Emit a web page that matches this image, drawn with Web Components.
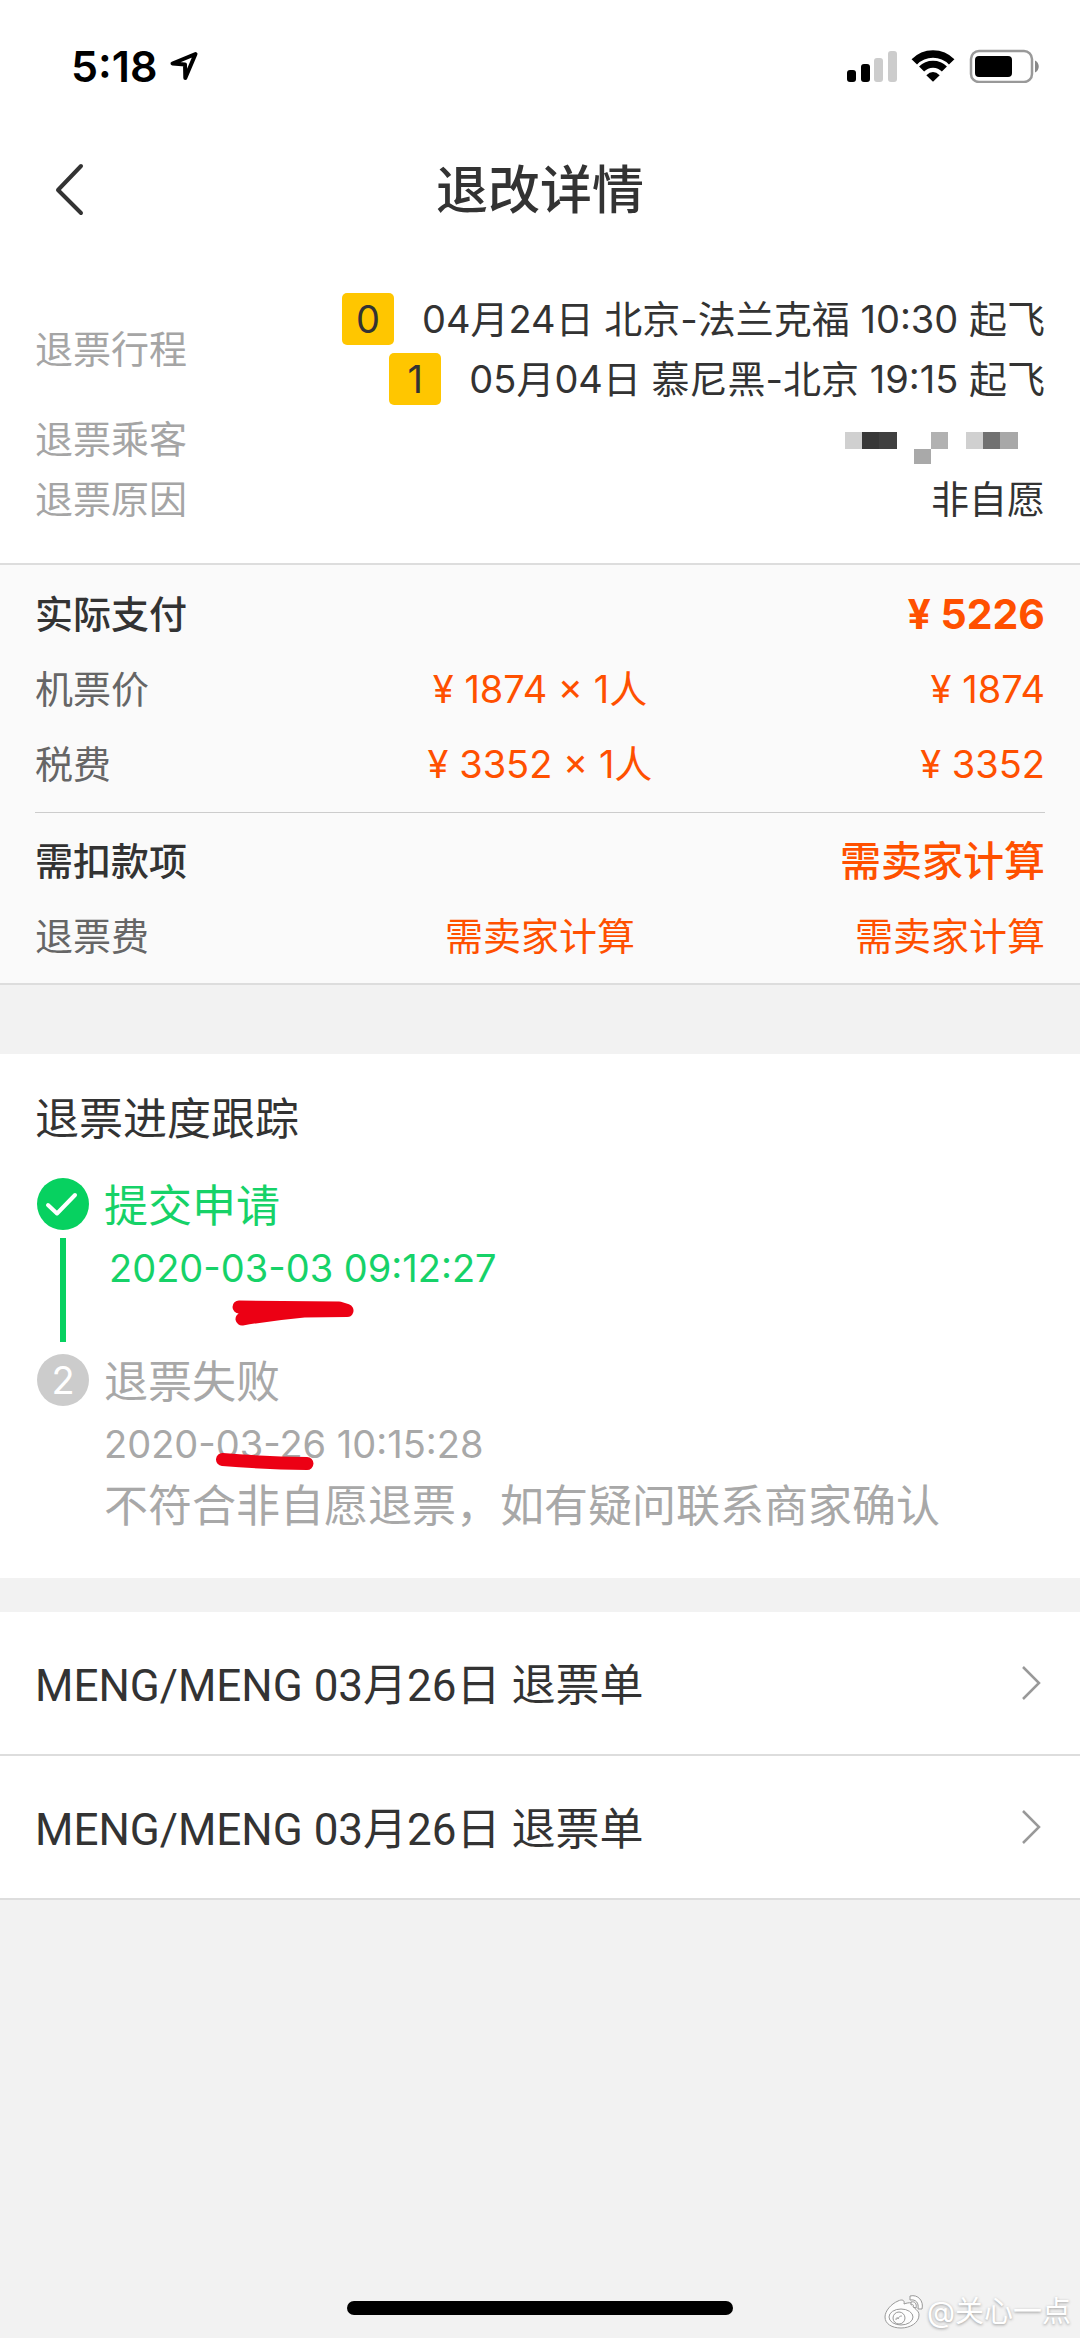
<!DOCTYPE html>
<html lang="zh-CN">
<head>
    <meta charset="UTF-8">
    <meta name="viewport" content="width=device-width, initial-scale=1">
    <title>退改详情</title>
    <style>
        body {
            margin: 0;
            background: #f2f2f2;
            color: #333;
            font-family: Inter, "Noto Sans CJK SC", sans-serif;
            font-size: 38px;
        }
    </style>
</head>
<body>

<template id="refund-page">
    <style>
        :host {
            display: flex;
            flex-direction: column;
            min-height: 100vh;
        }

        main {
            flex: 1;
        }
    </style>
    <slot name="top"></slot>
    <main><slot></slot></main>
    <slot name="bottom"></slot>
</template>

<template id="status-bar">
    <style>
        :host {
            display: flex;
            align-items: center;
            justify-content: space-between;
            height: 132px;
            padding: 0 40px 0 71px;
            background: #fff;
            color: #000;
            font-size: 43px;
            font-weight: 600;
        }

        div {
            display: flex;
            align-items: center;
            gap: 12px;
        }

        .icons {
            gap: 14px;
        }

        svg {
            display: block;
        }
    </style>
    <div>
        <slot></slot>
        <svg width="30" height="32" viewBox="0 0 30 32" fill="none" stroke="#000" stroke-width="4" stroke-linejoin="round">
            <path d="M26.5 4 3.5 13.5 16 14.5 16.3 28Z"/>
        </svg>
    </div>
    <div class="icons">
        <svg width="50" height="32" viewBox="0 0 50 32">
            <rect x="0" y="20" width="9" height="12" rx="3"/>
            <rect x="14" y="14" width="9" height="18" rx="3"/>
            <rect x="27" y="8" width="9" height="24" rx="3" fill="#ccc"/>
            <rect x="41" y="1" width="9" height="31" rx="3" fill="#ccc"/>
        </svg>
        <svg width="44" height="32" viewBox="0 0 44 32">
            <g fill="none" stroke="#000">
                <path d="M3.3 11.9A26 26 0 0 1 40.7 11.9" stroke-width="7.6"/>
                <path d="M10.6 19A15.8 15.8 0 0 1 33.4 19" stroke-width="7"/>
            </g>
            <path d="M22 31.8 15.3 25.2Q22 18.8 28.7 25.2Z"/>
        </svg>
        <svg width="71" height="34" viewBox="0 0 71 34">
            <rect x="2" y="2" width="61" height="31" rx="8" fill="#fff" stroke="#999" stroke-width="2.5"/>
            <rect x="6" y="7" width="37" height="21" rx="4"/>
            <path d="M66 11.5C71 13.5 71 21.5 66 23.5Z" fill="#888"/>
        </svg>
    </div>
</template>

<template id="nav-header">
    <style>
        :host {
            display: grid;
            grid-template-columns: 1fr auto 1fr;
            align-items: center;
            height: 114px;
            background: #fff;
        }

        button {
            justify-self: start;
            padding: 30px 44px 30px 54px;
            border: 0;
            background: none;
        }

        svg {
            display: block;
        }

        h1 {
            margin: 0;
            padding-top: 4px;
            font-size: 52px;
            font-weight: 500;
            line-height: 72px;
        }
    </style>
    <button type="button" aria-label="返回">
        <svg width="32" height="54" viewBox="0 0 32 54" fill="none" stroke="#333" stroke-width="4" stroke-linecap="round" stroke-linejoin="round">
            <path d="M27 4 4 28 27 51"/>
        </svg>
    </button>
    <h1><slot></slot></h1>
</template>

<template id="info-list">
    <style>
        :host {
            display: block;
            padding: 43px 35px 34px;
            border-bottom: 2px solid #ddd;
            background: #fff;
        }
    </style>
    <slot></slot>
</template>

<template id="info-row">
    <style>
        :host {
            display: flex;
            align-items: center;
            justify-content: space-between;
            line-height: 60px;
        }

        .label {
            color: #a5a5a5;
        }

        .value {
            display: flex;
            flex-direction: column;
            align-items: flex-end;
        }
    </style>
    <span class="label"><slot name="label"></slot></span>
    <div class="value"><slot></slot></div>
</template>

<template id="flight-leg">
    <style>
        :host {
            display: flex;
            align-items: center;
            gap: 28px;
        }

        .index {
            width: 52px;
            border-radius: 5px;
            background: #ffc600;
            line-height: 52px;
            text-align: center;
        }
    </style>
    <span class="index"><slot name="index"></slot></span>
    <span><slot></slot></span>
</template>

<!-- Passenger names are masked out with grey tiles -->
<template id="masked-name">
    <style>
        :host {
            display: block;
            height: 60px;
        }

        svg {
            display: block;
        }
    </style>
    <svg width="200" height="60" viewBox="0 0 200 60" role="img" aria-label="已隐藏" shape-rendering="crispEdges">
        <rect x="0" y="23" width="17" height="17" fill="#d0d0d0"/>
        <rect x="17" y="23" width="17" height="17" fill="#383838"/>
        <rect x="34" y="23" width="18" height="17" fill="#404040"/>
        <rect x="69" y="40" width="17" height="15" fill="#a9a9a9"/>
        <rect x="86" y="23" width="17" height="17" fill="#b1b1b1"/>
        <rect x="121" y="23" width="17" height="17" fill="#d0d0d0"/>
        <rect x="138" y="23" width="17" height="17" fill="#717171"/>
        <rect x="155" y="23" width="18" height="17" fill="#a8a8a8"/>
    </svg>
</template>

<template id="fare-table">
    <style>
        :host {
            display: block;
            padding: 12px 35px 9px;
            border-bottom: 2px solid #ddd;
            background: #fafafa;
        }

        table {
            width: 100%;
            table-layout: fixed;
            border-collapse: collapse;
            line-height: 75px;
        }

        th,
        td {
            padding: 0;
            color: #ff5000;
            text-align: right;
        }

        th {
            color: #666;
            font-weight: 400;
            text-align: left;
        }

        td:nth-child(2) {
            text-align: center;
        }

        .total th {
            color: #333;
            font-weight: 500;
        }

        .total td {
            font-size: 41px;
            font-weight: 700;
        }

        .total .text {
            font-weight: 500;
        }

        tbody + tbody::before {
            content: "";
            display: table-row;
            height: 12px;
        }

        tbody:first-child::after {
            content: "";
            display: table-row;
            height: 10px;
        }

        tbody + tbody {
            border-top: 1px solid #ccc;
        }
    </style>
    <table>
        <tbody>
            <tr class="total"><th scope="row">实际支付</th><td></td><td>¥ 5226</td></tr>
            <tr><th scope="row">机票价</th><td>¥ 1874 × 1人</td><td>¥ 1874</td></tr>
            <tr><th scope="row">税费</th><td>¥ 3352 × 1人</td><td>¥ 3352</td></tr>
        </tbody>
        <tbody>
            <tr class="total"><th scope="row">需扣款项</th><td></td><td class="text">需卖家计算</td></tr>
            <tr><th scope="row">退票费</th><td>需卖家计算</td><td>需卖家计算</td></tr>
        </tbody>
    </table>
</template>

<template id="progress-track">
    <style>
        :host {
            display: block;
            margin-top: 69px;
            padding: 34px 35px 41px;
            background: #fff;
            font-size: 44px;
            line-height: 62px;
        }

        h2 {
            margin: 0 0 24px;
            font-size: 44px;
            font-weight: 400;
        }
    </style>
    <h2><slot name="title"></slot></h2>
    <slot></slot>
</template>

<template id="progress-step">
    <style>
        :host {
            display: flex;
            gap: 15px;
            color: #a8a8a8;
        }

        :host([done]) {
            color: #16d268;
        }

        .rail {
            display: flex;
            flex-direction: column;
            align-items: center;
            gap: 8px;
            padding: 4px 0 8px 2px;
        }

        .marker {
            width: 52px;
            height: 52px;
            border-radius: 50%;
            background: #ccc;
            color: #fff;
            font-size: 38px;
            line-height: 52px;
            text-align: center;
        }

        .marker svg,
        .line {
            display: none;
        }

        :host([done]) .marker {
            background: #07d160;
        }

        :host([done]) .marker svg {
            display: block;
        }

        :host([done]) .line {
            display: block;
            flex: 1;
            width: 6px;
            background: #07d160;
        }

        .body {
            padding-top: 1px;
        }

        :host([done]) .body {
            padding-bottom: 51px;
        }

        .time {
            position: relative;
            font-size: 38px;
        }

        :host([done]) .time {
            padding-left: 5px;
        }
    </style>
    <div class="rail">
        <span class="marker">
            <slot name="index"></slot>
            <svg width="52" height="52" viewBox="0 0 52 52" fill="none" stroke="#fff" stroke-width="4" stroke-linecap="round" stroke-linejoin="round">
                <path d="M11 27 20 35.5 38 17"/>
            </svg>
        </span>
        <span class="line"></span>
    </div>
    <div class="body">
        <div><slot name="title"></slot></div>
        <div class="time"><slot name="time"></slot><slot name="mark"></slot></div>
        <slot></slot>
    </div>
</template>

<!-- Hand-drawn underline, lies over the date -->
<template id="pen-mark">
    <style>
        :host {
            position: absolute;
            left: 112px;
            top: 40px;
        }

        :host([kind="thick"]) {
            left: 128px;
            top: 63px;
        }

        svg {
            display: block;
        }
    </style>
    <svg width="124" height="28" viewBox="0 0 124 28" stroke="#ec0014" stroke-width="13" stroke-linecap="round" stroke-linejoin="round">
        <path/>
    </svg>
</template>

<template id="link-list">
    <style>
        :host {
            display: block;
            margin-top: 34px;
        }
    </style>
    <slot></slot>
</template>

<template id="link-row">
    <style>
        :host {
            display: block;
            border-bottom: 2px solid #ddd;
            background: #fff;
        }

        a {
            display: flex;
            align-items: center;
            justify-content: space-between;
            padding: 38px 35px;
            color: inherit;
            font-family: Roboto, "Noto Sans CJK SC", sans-serif;
            font-size: 44px;
            line-height: 60px;
            text-decoration: none;
        }

        span {
            padding-top: 6px;
        }
    </style>
    <a href="#">
        <span><slot></slot></span>
        <svg width="24" height="36" viewBox="0 0 24 36" fill="none" stroke="#999" stroke-width="2.5">
            <path d="M2 2 18 18 2 34"/>
        </svg>
    </a>
</template>

<template id="page-foot">
    <style>
        :host {
            display: grid;
            grid-template-columns: 1fr 386px 1fr;
            align-items: end;
        }

        .bar {
            grid-column: 2;
            height: 14px;
            margin-bottom: 23px;
            border-radius: 7px;
            background: #000;
        }

        .mark {
            display: flex;
            align-items: center;
            justify-self: end;
            gap: 2px;
            padding: 0 9px 5px 0;
            color: #fff;
            font-size: 29px;
            line-height: 42px;
            text-shadow: 0 1px 3px #999;
            white-space: nowrap;
        }
    </style>
    <div class="bar"></div>
    <div class="mark">
        <svg width="42" height="36" viewBox="0 0 42 36" fill="#fdfdfd" stroke="#999" stroke-width="1">
            <path d="M15 7C19 5 22 6 21 10C26 8 32 8 31 13C31 15 36 16 36 21C36 29 27 34 18 34C9 34 2 30 2 23C2 17 8 10 15 7Z"/>
            <ellipse cx="18" cy="23" rx="12" ry="8"/>
            <circle cx="16" cy="24" r="6"/>
            <path d="M13 26C13 23 15 23 15 25C16 22 18 22 19 22" fill="none"/>
            <path d="M27 2C35 0 41 7 39 15L35 15C36 9 33 5 27 6Z"/>
            <path d="M28 8C32 7 34 10 33 14L30 13C31 11 30 10 28 11Z"/>
        </svg>
        <slot></slot>
    </div>
</template>

<script>
    // Clones the <template> whose id is the tag name into an open shadow root
    class TemplateElement extends HTMLElement {
        constructor() {
            super();

            const template = document.getElementById(this.localName);
            this.attachShadow({ mode: "open" }).appendChild(
                template.content.cloneNode(true)
            );
        }
    }

    class PenMark extends TemplateElement {
        connectedCallback() {
            const path = this.shadowRoot.querySelector("path");

            if (this.getAttribute("kind") === "thick") {
                path.setAttribute("d", "M7 7 107 8 115 10.5 72 11Q40 14 10 19");
                path.setAttribute("fill", "#ec0014");
            } else {
                path.setAttribute("d", "M6.5 6.5Q50 10 91 10.5");
                path.setAttribute("fill", "none");
            }
        }
    }

    class LinkRow extends TemplateElement {
        connectedCallback() {
            this.shadowRoot.querySelector("a").href = this.getAttribute("href") || "#";
        }
    }

    [
        "refund-page", "status-bar", "nav-header", "info-list", "info-row",
        "flight-leg", "masked-name", "fare-table", "progress-track",
        "progress-step", "link-list", "page-foot"
    ].forEach(name => customElements.define(name, class extends TemplateElement {}));

    customElements.define("pen-mark", PenMark);
    customElements.define("link-row", LinkRow);
</script>

<refund-page>
    <status-bar slot="top">5:18</status-bar>
    <nav-header slot="top">退改详情</nav-header>

    <info-list>
        <info-row>
            <span slot="label">退票行程</span>
            <flight-leg><span slot="index">0</span>04月24日 北京-法兰克福 10:30 起飞</flight-leg>
            <flight-leg><span slot="index">1</span>05月04日 慕尼黑-北京 19:15 起飞</flight-leg>
        </info-row>
        <info-row>
            <span slot="label">退票乘客</span>
            <masked-name></masked-name>
        </info-row>
        <info-row>
            <span slot="label">退票原因</span>
            非自愿
        </info-row>
    </info-list>

    <fare-table></fare-table>

    <progress-track>
        <span slot="title">退票进度跟踪</span>
        <progress-step done>
            <span slot="title">提交申请</span>
            <span slot="time">2020-03-03 09:12:27</span>
            <pen-mark slot="mark" kind="thick"></pen-mark>
        </progress-step>
        <progress-step>
            <span slot="index">2</span>
            <span slot="title">退票失败</span>
            <span slot="time">2020-03-26 10:15:28</span>
            <pen-mark slot="mark"></pen-mark>
            不符合非自愿退票，如有疑问联系商家确认
        </progress-step>
    </progress-track>

    <link-list>
        <link-row href="#refund-1">MENG/MENG 03月26日 退票单</link-row>
        <link-row href="#refund-2">MENG/MENG 03月26日 退票单</link-row>
    </link-list>

    <page-foot slot="bottom">@关心一点</page-foot>
</refund-page>

</body>
</html>
